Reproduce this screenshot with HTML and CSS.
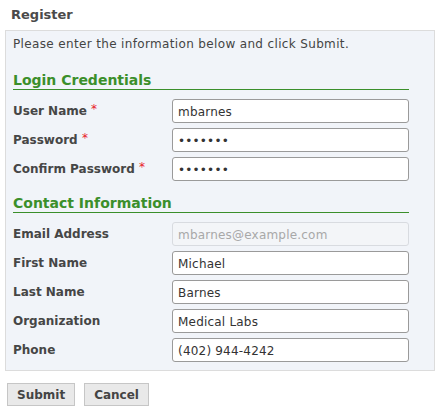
FILE: index.html
```html
<!DOCTYPE html>
<html>
<head>
<meta charset="utf-8">
<link rel="stylesheet" href="styles.css">
</head>
<body>
<h2 class="title">Register</h2>
<form class="panel">
  <p class="intro">Please enter the information below and click Submit.</p>
  <h3 class="section">Login Credentials</h3>
  <div class="rows">
    <div class="row"><label class="lbl">User Name <span class="req">*</span></label><input class="field" type="text" value="mbarnes"></div>
    <div class="row"><label class="lbl">Password <span class="req">*</span></label><input class="field" type="password" value="1234567"></div>
    <div class="row"><label class="lbl">Confirm Password <span class="req">*</span></label><input class="field" type="password" value="1234567"></div>
  </div>
  <h3 class="section second">Contact Information</h3>
  <div class="rows">
    <div class="row"><label class="lbl">Email Address</label><input class="field" type="text" value="mbarnes@example.com" disabled></div>
    <div class="row"><label class="lbl">First Name</label><input class="field" type="text" value="Michael"></div>
    <div class="row"><label class="lbl">Last Name</label><input class="field" type="text" value="Barnes"></div>
    <div class="row"><label class="lbl">Organization</label><input class="field" type="text" value="Medical Labs"></div>
    <div class="row"><label class="lbl">Phone</label><input class="field" type="text" value="(402) 944-4242"></div>
  </div>
</form>
<div class="actions">
  <button class="btn" type="button">Submit</button>
  <button class="btn" type="button">Cancel</button>
</div>
</body>
</html>
```
FILE: styles.css
```css
html, body {
  margin: 0;
  padding: 0;
  background: #ffffff;
}
body {
  padding: 0 5px;
  font-family: "DejaVu Sans", Verdana, sans-serif;
  font-size: 12px;
  color: #444444;
}
.title {
  margin: 0;
  padding: 7px 0 0 6px;
  height: 23px;
  box-sizing: border-box;
  height: 30px;
  font-size: 13px;
  line-height: 16px;
  font-weight: bold;
  color: #4a4a4a;
}
.panel {
  box-sizing: border-box;
  width: 430px;
  margin: 0;
  padding: 6px 25px 8px 7px;
  background: #f1f4f9;
  border: 1px solid #dcdcdc;
}
.intro {
  margin: 0;
  line-height: 15px;
  letter-spacing: 0.35px;
  color: #444444;
}
.section {
  margin: 20px 0 9px 0;
  font-size: 14px;
  line-height: 17px;
  font-weight: bold;
  color: #3b8f2b;
  border-bottom: 1px solid #3b8f2b;
}
.section.second {
  margin-top: 14px;
}
.rows {
  display: flex;
  flex-direction: column;
  gap: 5px;
}
.row {
  display: flex;
  align-items: center;
  height: 24px;
}
.lbl {
  width: 159px;
  font-weight: bold;
  color: #464646;
  line-height: 15px;
}
.req {
  color: #e8202a;
  font-weight: normal;
  position: relative;
  top: -2px;
  margin-left: 0;
}
.field {
  box-sizing: border-box;
  width: 237px;
  height: 24px;
  margin: 0;
  padding: 2px 5px 0;
  border: 1px solid #9a9a9a;
  border-radius: 3px;
  background: #ffffff;
  font-family: "DejaVu Sans", Verdana, sans-serif;
  font-size: 12px;
  letter-spacing: 0.2px;
  color: #333333;
}
.field:disabled {
  border-color: #d8dbe0;
  background: #f3f5f8;
  color: #a8a8a8;
}
.actions {
  display: flex;
  gap: 9px;
  margin-top: 12px;
  padding-left: 2px;
}
.btn {
  margin: 0;
  height: 23px;
  padding: 0 9px;
  background: #e9e9e9;
  border: 1px solid #c6c6c6;
  border-radius: 0;
  font-family: "DejaVu Sans", Verdana, sans-serif;
  font-size: 12px;
  font-weight: bold;
  color: #444444;
}
```
